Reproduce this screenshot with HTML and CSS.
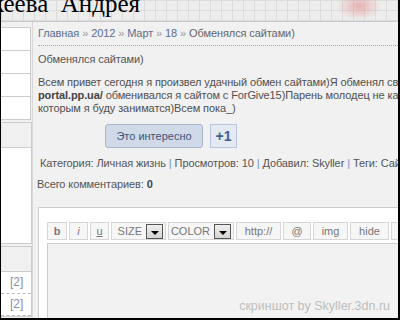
FILE: index.html
```html
<!DOCTYPE html>
<html lang="ru">
<head>
<meta charset="UTF-8">
<title>Обменялся сайтами)</title>
<link rel="stylesheet" href="styles.css">
</head>
<body>
<div class="frame">
  <div class="header">
    <div class="site-title">кеева&nbsp;&nbsp;Андрея</div>
  </div>

  <div class="page">
    <div class="sidebar">
      <div class="side-box">
        <div class="side-row"></div>
        <div class="side-row"></div>
        <div class="side-row"></div>
        <div class="side-row"></div>
      </div>
      <div class="side-block">
        <div class="side-head"></div>
        <div class="side-body"></div>
      </div>
      <div class="side-block">
        <div class="side-head"></div>
        <div class="side-count">[2]</div>
        <div class="side-count">[2]</div>
      </div>
    </div>

    <div class="main">
      <div class="crumbs">
        <a href="#">Главная</a> <span class="sep">»</span> <a href="#">2012</a> <span class="sep">»</span>
        <a href="#">Март</a> <span class="sep">»</span> <a href="#">18</a> <span class="sep">»</span> Обменялся сайтами)
      </div>

      <div class="post-title">Обменялся сайтами)</div>
      <div class="post-text">
        Всем привет сегодня я произвел удачный обмен сайтами)Я обменял свой сайт с<br>
        <b>portal.pp.ua/</b> обменивался я сайтом с ForGive15)Парень молодец не каждый<br>
        которым я буду заниматся)Всем пока_)
      </div>

      <div class="like-row">
        <button class="like-btn">Это интересно</button>
        <span class="plus-one">+1</span>
      </div>

      <div class="details">
        Категория: <a href="#">Личная жизнь</a> <span class="bar">|</span> Просмотров: 10
        <span class="bar">|</span> Добавил: <a href="#">Skyller</a> <span class="bar">|</span> Теги: Сайты
      </div>

      <div class="comments-count">Всего комментариев: <b>0</b></div>

      <div class="comment-form">
        <div class="toolbar">
          <span class="tb-btn tb-b">b</span>
          <span class="tb-btn tb-i">i</span>
          <span class="tb-btn tb-u">u</span>
          <span class="tb-btn tb-size">SIZE <span class="drop"></span></span>
          <span class="tb-btn tb-color">COLOR <span class="drop"></span></span>
          <span class="tb-btn tb-url">http://</span>
          <span class="tb-btn tb-mail">@</span>
          <span class="tb-btn tb-img">img</span>
          <span class="tb-btn tb-hide">hide</span>
          <span class="tb-btn tb-list">list</span>
        </div>
        <div class="textarea"></div>
      </div>
    </div>
  </div>

  <div class="watermark">скриншот by Skyller.3dn.ru</div>
</div>
</body>
</html>
```

FILE: styles.css
```css
body {
  margin: 0;
  font-family: 'Liberation Sans', Arial, sans-serif;
  font-size: 11px;
  color: #555;
  background: #f1f1f1;
  overflow: hidden;
}
a {
  color: inherit;
  text-decoration: none;
}
.frame {
  position: relative;
  width: 400px;
  height: 320px;
  box-sizing: border-box;
  border-left: 1px solid #000;
  border-right: 2px solid #000;
  border-bottom: 2px solid #000;
  overflow: hidden;
  background: #f1f1f1;
}
.header {
  height: 21px;
  border-bottom: 1px solid #c9c9c9;
  overflow: hidden;
  background:
    radial-gradient(ellipse 22px 14px at 358px 6px, rgba(225,120,120,0.5), rgba(225,120,120,0)),
    repeating-linear-gradient(90deg, #dcdcdc 0 1px, transparent 1px 11px),
    repeating-linear-gradient(0deg, #dcdcdc 0 1px, transparent 1px 10px),
    #ededed;
}
.site-title {
  font-family: 'Liberation Serif', 'Times New Roman', serif;
  font-size: 25px;
  line-height: 25px;
  color: #000;
  margin: -9px 0 0 -9px;
  white-space: nowrap;
}
.page {
  display: flex;
}
.sidebar {
  width: 31px;
  flex-shrink: 0;
  padding-top: 5px;
  border-right: 1px solid #d8d8d8;
}
.side-box {
  width: 29px;
  background: #fff;
  border: 1px solid #ccc;
  border-left: none;
}
.side-row {
  height: 22px;
  border-bottom: 1px solid #ccc;
}
.side-row:last-child {
  border-bottom: none;
}
.side-block {
  margin-top: 2px;
  background: #fff;
  border: 1px solid #ccc;
  border-left: none;
}
.side-head {
  height: 24px;
  background: #f0f0f0;
  border-bottom: 1px solid #ccc;
}
.side-body {
  height: 95px;
}
.side-count {
  height: 21px;
  line-height: 21px;
  padding-left: 9px;
  font-size: 12px;
  color: #8a8ea6;
  border-bottom: 1px dashed #bbb;
}
.main {
  flex: 1;
  min-width: 0;
  padding-left: 5px;
  white-space: nowrap;
  letter-spacing: -0.1px;
}
.crumbs {
  padding: 5px 0 5px;
  line-height: 13px;
  color: #666;
  border-bottom: 1px dotted #aaa;
}
.crumbs a {
  color: #5b6e8c;
}
.crumbs .sep {
  color: #999;
}
.post-title {
  margin-top: 7px;
  line-height: 13px;
  color: #555;
}
.post-text {
  margin-top: 10px;
  line-height: 13px;
  color: #505050;
}
.post-text b {
  color: #444;
}
.like-row {
  display: flex;
  gap: 7px;
  margin: 9px 0 0 67px;
}
.like-btn {
  width: 98px;
  height: 24px;
  font-family: inherit;
  font-size: 11px;
  color: #3d5478;
  background: #cfd9e8;
  border: 1px solid #a9b7cb;
  border-radius: 3px;
  padding: 0;
}
.plus-one {
  width: 25px;
  height: 22px;
  line-height: 22px;
  text-align: center;
  font-size: 14px;
  font-weight: bold;
  color: #3f5f8f;
  background: #e4e9f3;
  border: 1px solid #b7c3d8;
}
.details {
  margin-top: 9px;
  padding-left: 2px;
  line-height: 13px;
}
.details .bar {
  color: #6d8fcc;
}
.comments-count {
  margin: 8px 0 0 -1px;
  line-height: 13px;
}
.comments-count b {
  color: #444;
}
.comment-form {
  margin-top: 16px;
  padding: 14px 0 0 8px;
  height: 120px;
  background: #fff;
  border: 1px solid #ccc;
  border-right: none;
  letter-spacing: 0;
}
.toolbar {
  display: flex;
  gap: 2px;
}
.tb-btn {
  display: flex;
  align-items: center;
  justify-content: center;
  gap: 4px;
  height: 16px;
  border: 1px solid #d6d6d6;
  background: #f6f6f6;
  color: #777;
  font-size: 11px;
  flex-shrink: 0;
}
.tb-b { width: 18px; font-weight: bold; }
.tb-i { width: 17px; font-style: italic; }
.tb-u { width: 17px; text-decoration: underline; }
.tb-size { width: 51px; justify-content: flex-end; padding-right: 2px; }
.tb-color { width: 62px; justify-content: flex-end; padding-right: 2px; }
.tb-url { width: 43px; }
.tb-mail { width: 26px; }
.tb-img { width: 33px; }
.tb-hide { width: 37px; }
.tb-list { width: 30px; }
.drop {
  position: relative;
  width: 15px;
  height: 13px;
  border: 1px solid #555;
  background: linear-gradient(#f0f0f0, #d4d4d4);
}
.drop::after {
  content: "";
  position: absolute;
  left: 4px;
  bottom: 3px;
  border-left: 4px solid transparent;
  border-right: 4px solid transparent;
  border-top: 4px solid #000;
}
.textarea {
  margin-top: 3px;
  height: 90px;
  background: #f2f2f2;
  border: 1px solid #ccc;
  border-right: none;
}
.watermark {
  position: absolute;
  right: 8px;
  bottom: 5px;
  font-size: 12.5px;
  color: #bdbdbd;
}
```
